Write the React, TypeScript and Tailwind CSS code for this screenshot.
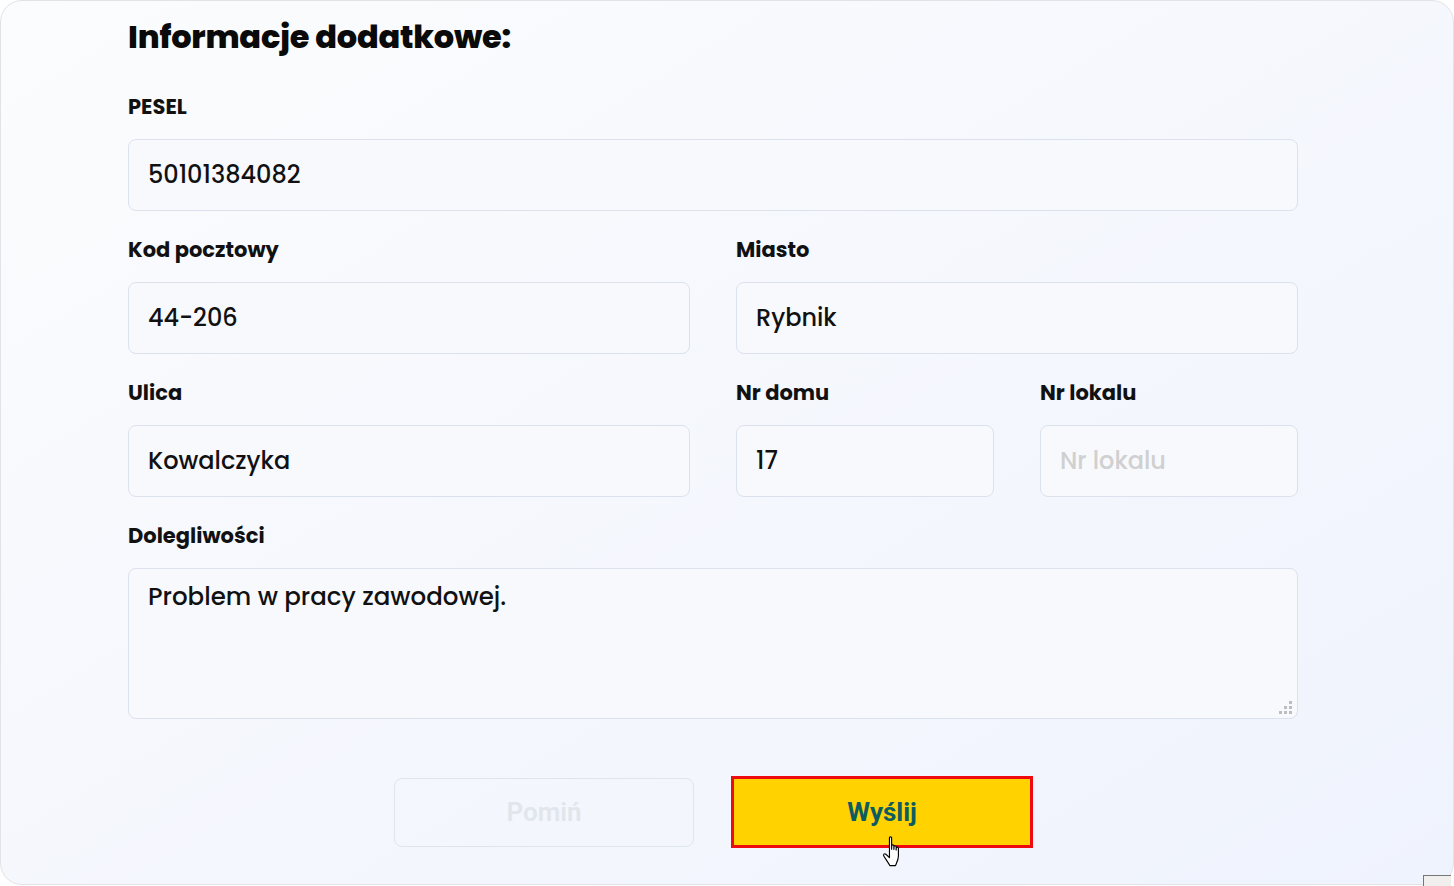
import React from "react";

const font = { fontFamily: "Poppins, 'Open Sans', 'DejaVu Sans', sans-serif" };
const btnFont = { fontFamily: "Roboto, 'Liberation Sans', sans-serif" };

const Label = ({ children }: { children: React.ReactNode }) => (
    <label className="block h-6 leading-6 text-[21px] font-bold text-[#111] mb-5">{children}</label>
);

const Field = ({ label, value, placeholder }: { label: string; value?: string; placeholder?: string }) => (
    <div className="flex flex-col">
        <Label>{label}</Label>
        <input
            readOnly
            defaultValue={value}
            placeholder={placeholder}
            className="h-[72px] w-full rounded-lg border border-[#dbe2ee] bg-[#f7f9fd] px-[19px] pb-[2px] text-[24px] font-medium text-[#111] placeholder:text-[#d0d0d0] outline-none"
            style={font}
        />
    </div>
);

const HandCursor = () => (
    <svg width="26" height="34" viewBox="0 0 22 30" className="absolute left-[881px] top-[835px]">
        <path
            d="M7 2.5c0-1.1 1.9-1.1 1.9 0v10l0.1-3c0-1.1 1.9-1.1 1.9 0v3.2l0.1-2.4c0-1.1 1.9-1.1 1.9 0v3l0.1-1.8c0-1.1 1.9-1.1 1.9 0v7c0 3.5-1.8 6.5-2.6 8.5H7.3C6 24.5 3.5 21 2 18.5c-0.8-1.3 0.6-2.6 1.8-1.5L7 20z"
            fill="#fff"
            stroke="#000"
            strokeWidth="1"
            strokeLinejoin="round"
        />
    </svg>
);

const App = () => {
    return (
        <div className="relative h-[886px] w-[1454px] overflow-hidden bg-white" style={font}>
            <div className="h-[885px] w-[1454px] rounded-[22px] border border-[#e2e3e6] bg-linear-to-br from-[#fbfcfd] to-[#eff3fd]">
                <div className="ml-[127px] w-[1170px] pt-[16px]">
                    {/* heading */}
                    <h1 className="h-10 leading-10 text-[32px] font-extrabold text-[#0a0a0a] mb-[38px] tracking-[-0.2px]">
                        Informacje dodatkowe:
                    </h1>

                    <div className="flex flex-col gap-[27px]">
                        <Field label="PESEL" value="50101384082" />

                        <div className="grid grid-cols-2 gap-[46px]">
                            <Field label="Kod pocztowy" value="44-206" />
                            <Field label="Miasto" value="Rybnik" />
                        </div>

                        <div className="grid grid-cols-[1fr_258px_258px] gap-[46px]">
                            <Field label="Ulica" value="Kowalczyka" />
                            <Field label="Nr domu" value="17" />
                            <Field label="Nr lokalu" placeholder="Nr lokalu" />
                        </div>

                        <div className="flex flex-col">
                            <Label>Dolegliwości</Label>
                            <div className="relative">
                                <textarea
                                    readOnly
                                    defaultValue="Problem w pracy zawodowej."
                                    className="block h-[151px] w-full resize-none rounded-lg border border-[#dbe2ee] bg-[#f7f9fd] px-[19px] py-[10px] text-[24.5px] font-medium text-[#111] outline-none"
                                    style={font}
                                />
                                {/* resize grip */}
                                <svg width="15" height="15" className="absolute right-[4px] bottom-[3px]">
                                    <rect x="10" y="0" width="3" height="3" fill="#bdbdbd" />
                                    <rect x="5" y="5" width="3" height="3" fill="#bdbdbd" />
                                    <rect x="10" y="5" width="3" height="3" fill="#bdbdbd" />
                                    <rect x="0" y="10" width="3" height="3" fill="#bdbdbd" />
                                    <rect x="5" y="10" width="3" height="3" fill="#bdbdbd" />
                                    <rect x="10" y="10" width="3" height="3" fill="#bdbdbd" />
                                </svg>
                            </div>
                        </div>
                    </div>

                    {/* buttons */}
                    <div className="mt-[59px] flex justify-center gap-[37px] pl-[1px]">
                        <button
                            className="h-[69px] w-[300px] rounded-lg border border-[#dfe5ef] text-[26px] font-semibold text-[#e1e6ec]"
                            style={btnFont}
                        >
                            Pomiń
                        </button>
                        <button
                            className="h-[72px] w-[302px] -mt-[2px] border-[3px] border-[#ee0a0e] bg-[#ffd200] text-[26px] font-bold text-[#0c5c62]"
                            style={btnFont}
                        >
                            Wyślij
                        </button>
                    </div>
                </div>
            </div>
            <HandCursor />
            <div className="absolute left-[1423px] top-[875px] h-[12px] w-[28px] border-l border-t border-[#777] bg-[#f0efed]" />
        </div>
    );
};

export default App;
